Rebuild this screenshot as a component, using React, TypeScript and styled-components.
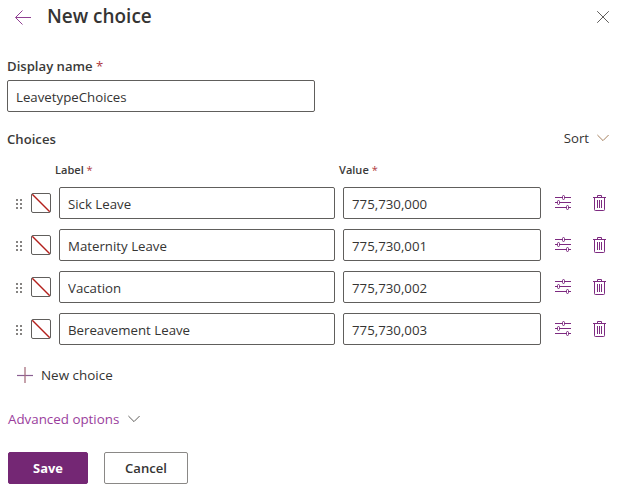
import React from "react";
import styled, { createGlobalStyle } from "styled-components";

const GlobalStyle = createGlobalStyle`
  *, *::before, *::after { box-sizing: border-box; }
  body {
    margin: 0;
    background: #fff;
    color: #353433;
    font-family: "Open Sans", "Noto Sans", sans-serif;
    font-size: 13.25px;
    line-height: 20px;
  }
  button, input { font: inherit; color: inherit; }
  svg { display: block; flex: none; }
`;

const Panel = styled.form`
  display: flex;
  flex-direction: column;
  width: 628px;
  height: 497px;
  padding: 3px 0 0 7px;
  overflow: hidden;
`;

const Header = styled.header`
  display: flex;
  align-items: center;
  height: 28px;
  padding: 0 19px 0 8px;
`;

const Title = styled.h1`
  flex: 1;
  margin: 0 0 2px 16px;
  font-size: 18.95px;
  font-weight: 600;
  line-height: 26px;
`;

const IconButton = styled.button`
  display: flex;
  padding: 0;
  border: 0;
  background: none;
`;

const FieldLabel = styled.label<{ $small?: boolean }>`
  color: #3b3a39;
  font-size: ${(p) => (p.$small ? "11.05px" : "13.15px")};
  font-weight: 600;
  line-height: 20px;
`;

const Star = styled.span`
  color: #b03a40;
  font-weight: 400;
`;

const TextInput = styled.input<{ $width: number }>`
  width: ${(p) => p.$width}px;
  height: 32px;
  padding: 2px 8px 0;
  border: 1px solid #605e5c;
  border-radius: 2px;
  outline: none;
  background: #fff;
`;

const NameField = styled.div`
  display: flex;
  flex-direction: column;
  margin-top: 25px;
  gap: 4px;
`;

const ChoicesBar = styled.div`
  display: flex;
  justify-content: space-between;
  align-items: center;
  height: 20px;
  margin-top: 17px;
  padding-right: 19px;
`;

const SortButton = styled(IconButton)`
  align-items: center;
  gap: 8px;
  margin-bottom: 2px;
  font-size: 13.2px;
`;

const ColumnHeads = styled.div`
  display: grid;
  grid-template-columns: 284px 1fr;
  margin-top: 11px;
  padding-left: 48px;
`;

const ChoiceList = styled.ul`
  display: flex;
  flex-direction: column;
  gap: 10px;
  margin: 7px 0 0;
  padding: 0;
  list-style: none;
`;

const ChoiceRow = styled.li`
  display: grid;
  grid-template-columns: 24px 28px 284px 212px 38px 16px;
  align-items: center;
  height: 32px;
`;

const DragHandle = styled.span`
  display: grid;
  grid-template-columns: repeat(2, 2px);
  grid-auto-rows: 2px;
  gap: 2px;
  margin: 2px 0 0 9px;

  i { background: #858381; }
`;

const Swatch = styled.button`
  display: flex;
  width: 20px;
  height: 20px;
  padding: 0;
  border: 1px solid #605e5c;
  border-radius: 2px;
  background: #fff;
`;

const AddButton = styled(IconButton)`
  align-items: center;
  align-self: flex-start;
  gap: 8px;
  margin: 20px 0 0 10px;
  font-size: 13.45px;
`;

const AdvancedButton = styled(IconButton)`
  align-items: center;
  align-self: flex-start;
  gap: 8.5px;
  margin: 24px 0 0 1px;
  color: #9a3d9c;
  font-size: 13.35px;
`;

const Actions = styled.footer`
  display: flex;
  gap: 16px;
  margin: 23px 0 0 1px;
`;

const ActionButton = styled.button<{ $primary?: boolean }>`
  width: ${(p) => (p.$primary ? 80 : 84)}px;
  height: 32px;
  padding: 0 0 1px;
  border: 1px solid ${(p) => (p.$primary ? "#742774" : "#8a8886")};
  border-radius: 2px;
  background: ${(p) => (p.$primary ? "#742774" : "#fff")};
  color: ${(p) => (p.$primary ? "#fff" : "#353433")};
  font-size: ${(p) => (p.$primary ? "12.9px" : "13.1px")};
  font-weight: ${(p) => (p.$primary ? 700 : 600)};
`;

const BackIcon = () => (
  <svg width="16" height="16" fill="none" stroke="#8f3f92">
    <path d="M16 8.5H.8M7.5 1.5l-7 7 7 7" />
  </svg>
);

const CloseIcon = () => (
  <svg width="12" height="12" fill="none" stroke="#605e5c">
    <path d="M.2.2l11.6 11.6M11.8.2.2 11.8" />
  </svg>
);

const ChevronIcon = ({ color }: { color: string }) => (
  <svg width="12" height="8" fill="none" stroke={color}>
    <path d="M.4 1l5.6 5.6L11.6 1" />
  </svg>
);

const PlusIcon = () => (
  <svg width="16" height="16" fill="none">
    <path d="M0 8.5h16" stroke="#8a5f92" strokeWidth="1.2" />
    <path d="M8 0v16" stroke="#a8707f" strokeWidth="1.3" />
  </svg>
);

const SlidersIcon = () => (
  <svg width="16" height="16" fill="none" stroke="#7d2a80">
    <path d="M0 2.5h7M10 2.5h6M0 7.5h2M5 7.5h11M0 12.5h11M14 12.5h2" />
    <rect x="7.5" y=".5" width="2" height="4" rx="1" />
    <rect x="2.5" y="5.5" width="2" height="4" rx="1" />
    <rect x="11.5" y="10.5" width="2" height="4" rx="1" />
  </svg>
);

const TrashIcon = () => (
  <svg width="13" height="16" fill="none" stroke="#7d2a80">
    <path d="M0 2.5h13M4.5 2V.5h4V2M1.5 2.5v12.2q0 .8.8.8h8.4q.8 0 .8-.8V2.5" />
    <path d="M4.5 5v8M6.5 5v8M8.5 5v8" />
  </svg>
);

const NoColorIcon = () => (
  <svg width="18" height="18" fill="none" stroke="#b3201c" strokeWidth="1.4">
    <path d="M.3.3l17.4 17.4" />
  </svg>
);

const choices = [
  { label: "Sick Leave", value: "775,730,000" },
  { label: "Maternity Leave", value: "775,730,001" },
  { label: "Vacation", value: "775,730,002" },
  { label: "Bereavement Leave", value: "775,730,003" },
];

export default function App() {
  return (
    <>
      <GlobalStyle />
      <Panel onSubmit={(e) => e.preventDefault()}>
        <Header>
          <IconButton type="button" aria-label="Back"><BackIcon /></IconButton>
          <Title>New choice</Title>
          <IconButton type="button" aria-label="Close"><CloseIcon /></IconButton>
        </Header>
        <NameField>
          <FieldLabel htmlFor="name">Display name <Star>*</Star></FieldLabel>
          <TextInput id="name" $width={308} defaultValue="LeavetypeChoices" />
        </NameField>
        <ChoicesBar>
          <FieldLabel as="span">Choices</FieldLabel>
          <SortButton type="button">Sort <ChevronIcon color="#a5805f" /></SortButton>
        </ChoicesBar>
        <ColumnHeads>
          <FieldLabel as="span" $small>Label <Star>*</Star></FieldLabel>
          <FieldLabel as="span" $small>Value <Star>*</Star></FieldLabel>
        </ColumnHeads>
        <ChoiceList>
          {choices.map((choice) => (
            <ChoiceRow key={choice.value}>
              <DragHandle><i /><i /><i /><i /><i /><i /></DragHandle>
              <Swatch type="button" aria-label="Color"><NoColorIcon /></Swatch>
              <TextInput $width={276} aria-label="Label" defaultValue={choice.label} />
              <TextInput $width={198} aria-label="Value" defaultValue={choice.value} />
              <IconButton type="button" aria-label="Options"><SlidersIcon /></IconButton>
              <IconButton type="button" aria-label="Delete"><TrashIcon /></IconButton>
            </ChoiceRow>
          ))}
        </ChoiceList>
        <AddButton type="button"><PlusIcon /> New choice</AddButton>
        <AdvancedButton type="button">Advanced options <ChevronIcon color="#605e5c" /></AdvancedButton>
        <Actions>
          <ActionButton $primary type="submit">Save</ActionButton>
          <ActionButton type="button">Cancel</ActionButton>
        </Actions>
      </Panel>
    </>
  );
}
